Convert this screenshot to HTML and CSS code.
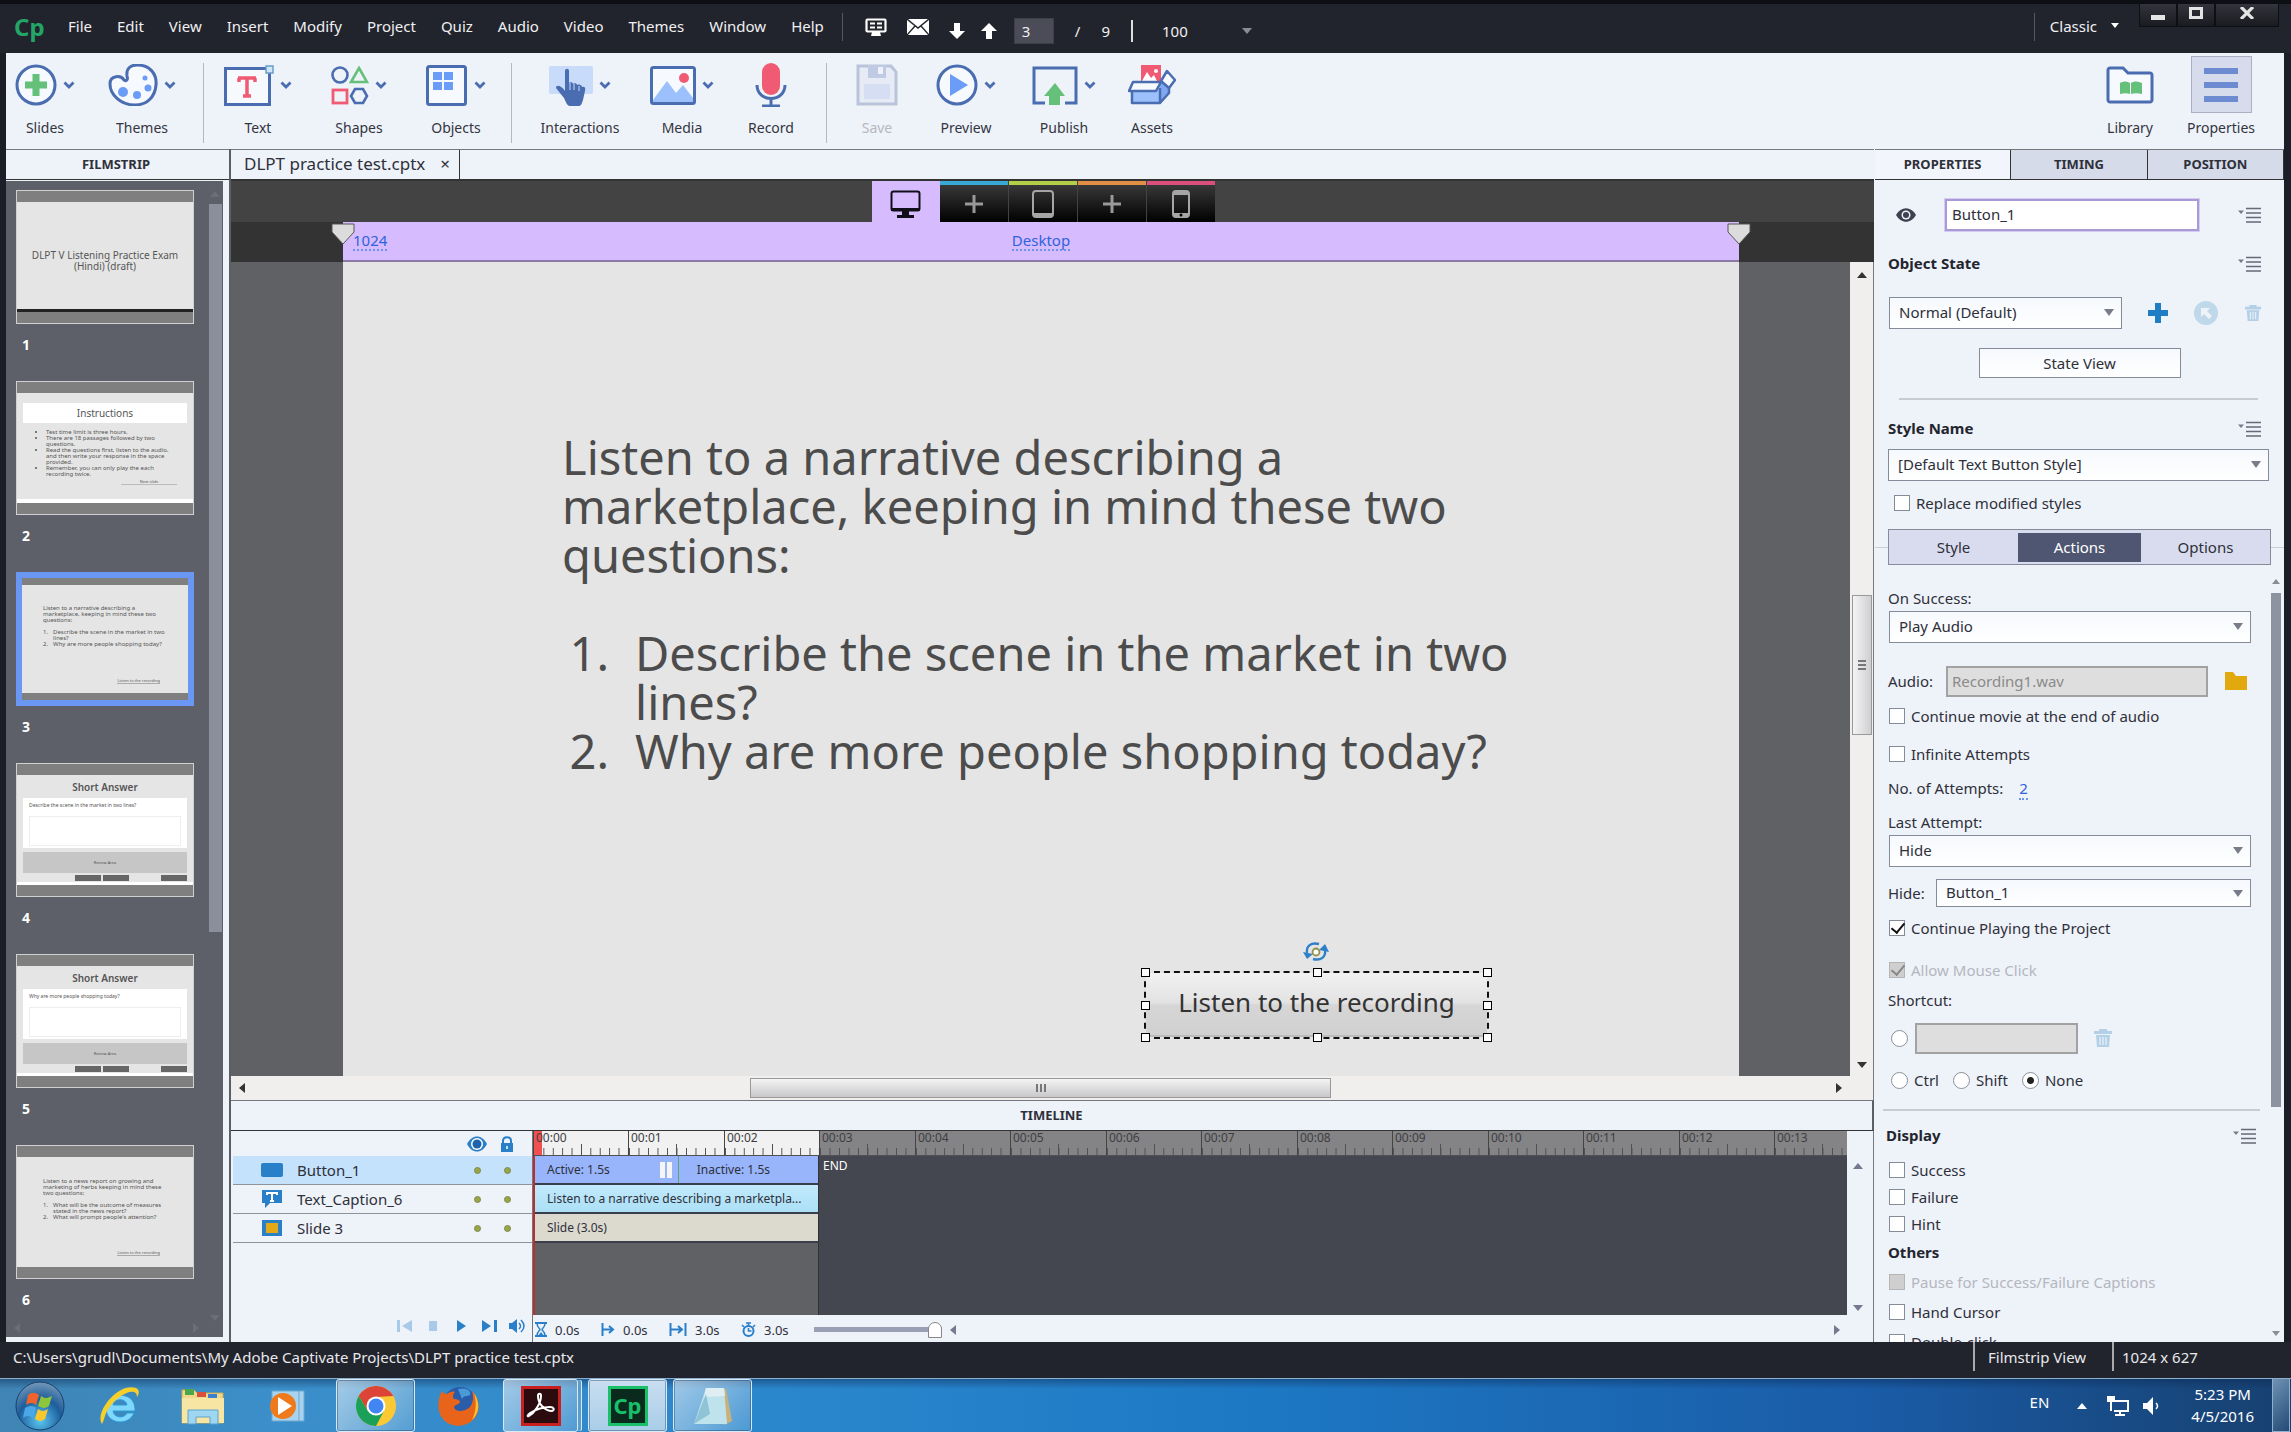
FILE: index.html
```html
<!DOCTYPE html>
<html lang="en">
<head>
<meta charset="utf-8">
<title>DLPT practice test.cptx</title>
<link rel="stylesheet" href="styles.css">
</head>
<body>
<svg class="defs" aria-hidden="true">
  <symbol id="chev" viewBox="0 0 12 8"><path d="M1.500 1.500 6 6l4.500-4.500" fill="none" stroke="#4a6cb0" stroke-width="2.800"/></symbol>
  <symbol id="menu" viewBox="0 0 24 16"><path d="M0 3.500h6L3 7z" fill="#777b88"/><path d="M8 1.500h15M8 6h15M8 10.500h15M8 15h15" stroke="#666a78" stroke-width="1.600"/></symbol>
  <symbol id="trash" viewBox="0 0 18 18"><path d="M5 0h8v2h5v3H0V2h5z" fill="#b4d0e6"/><path d="M2 6h14l-1 12H3z" fill="#b4d0e6"/><path d="M6 8v8M9 8v8M12 8v8" stroke="#eef2f9" stroke-width="1.200"/></symbol>
  <symbol id="plus" viewBox="0 0 18 18"><path d="M9 0v18M0 9h18" stroke="#999" stroke-width="3"/></symbol>
  <symbol id="grip" viewBox="0 0 24 22"><path d="M1 1h22v8L12 21 1 9z" fill="#dcdcdc" stroke="#555"/></symbol>
</svg>
<div class="window">
  <header class="titlebar">
    <span class="logo">Cp</span>
    <nav class="menus">
      <button>File</button><button>Edit</button><button>View</button><button>Insert</button><button>Modify</button><button>Project</button><button>Quiz</button><button>Audio</button><button>Video</button><button>Themes</button><button>Window</button><button>Help</button>
    </nav>
    <i class="bar-sep"></i>
    <div class="quick">
      <button aria-label="Review"><svg width="22" height="18" viewBox="0 0 22 18"><rect x="1.500" y="1.500" width="19" height="12" rx="1" fill="none" stroke="#fff" stroke-width="2.200"/><path d="M5 5.500h5M12 5.500h5M5 9.500h5M12 9.500h5" stroke="#fff" stroke-width="2"/><path d="M7 14h8l1 4H6z" fill="#fff"/></svg></button>
      <button aria-label="Mail"><svg width="22" height="16" viewBox="0 0 22 16"><path d="M0 0h22v16H0z" fill="#fff"/><path d="M0 0l11 9L22 0M0 16l8-9M22 16l-8-9" fill="none" stroke="#24262f" stroke-width="1.400"/></svg></button>
      <button class="low" aria-label="Next slide"><svg width="16" height="16" viewBox="0 0 16 16"><path d="M5 0h6v8h5l-8 8-8-8h5z" fill="#fff"/></svg></button>
      <button class="low" aria-label="Previous slide"><svg width="16" height="16" viewBox="0 0 16 16"><path d="M5 16h6V8h5L8 0 0 8h5z" fill="#fff"/></svg></button>
    </div>
    <div class="pager">
      <input class="page-input" aria-label="Slide number" value="3">
      <span>/</span><span>9</span><i class="zoom-sep"></i>
      <button class="zoom"><span>100</span><i class="tri"></i></button>
    </div>
    <i class="bar-sep end"></i>
    <button class="workspace"><span>Classic</span><i class="tri white small"></i></button>
    <div class="winbtns">
      <button aria-label="Minimize"><svg width="14" height="14" viewBox="0 0 14 14"><path d="M0 9h14v5H0z" fill="#e4e4e4"/></svg></button>
      <button aria-label="Maximize"><svg width="14" height="12" viewBox="0 0 14 12"><rect x="1.500" y="1.500" width="11" height="9" fill="none" stroke="#e4e4e4" stroke-width="3"/></svg></button>
      <button class="close" aria-label="Close"><svg width="14" height="12" viewBox="0 0 14 12"><path d="M1 0l12 12M13 0L1 12" stroke="#e4e4e4" stroke-width="3.200"/></svg></button>
    </div>
  </header>

  <div class="toolbar">
    <button class="tool w78"><span class="ico"><svg width="42" height="42" viewBox="0 0 42 42"><circle cx="21" cy="21" r="19" fill="#f6f9fe" stroke="#4a6cb0" stroke-width="3"/><path d="M21 10v22M10 21h22" stroke="#65c07a" stroke-width="7"/></svg><svg width="12" height="8"><use href="#chev"/></svg></span>Slides</button>
    <button class="tool w116"><span class="ico"><svg width="50" height="42" viewBox="0 0 50 42"><path d="M19 12C18 4 23 1 29 1c13 0 20 9 19 20-1 12-9 20-21 20C13 41 2 31 2 20c0-9 11-9 14-4 3 2 4-1 3-4z" fill="#f6f9fe" stroke="#4a6cb0" stroke-width="3"/><circle cx="15" cy="28" r="5" fill="#6b9cf7"/><circle cx="29" cy="31" r="4" fill="#6b9cf7"/><circle cx="40" cy="24" r="3.500" fill="#6b9cf7"/><circle cx="37" cy="14" r="2.500" fill="#6b9cf7"/></svg><svg width="12" height="8"><use href="#chev"/></svg></span>Themes</button>
    <i class="tool-sep"></i>
    <button class="tool w102"><span class="ico"><svg width="50" height="42" viewBox="0 0 50 42"><rect x="1.500" y="4.500" width="44" height="36" fill="#f6f9fe" stroke="#4a6cb0" stroke-width="3"/><rect x="42" y="2" width="7" height="7" fill="#cfe6fb" stroke="#6b9cc7" stroke-width="1.500"/><path d="M15 14v4M31 14v4M14 14h18M23 13v20M19 32h8" fill="none" stroke="#f05a72" stroke-width="3.500"/></svg><svg width="12" height="8"><use href="#chev"/></svg></span>Text</button>
    <button class="tool w100"><span class="ico"><svg width="38" height="42" viewBox="0 0 38 42"><circle cx="9" cy="11" r="7.500" fill="none" stroke="#4a6cb0" stroke-width="2.600"/><path d="M28 4l8 14H20z" fill="none" stroke="#65c07a" stroke-width="2.600"/><rect x="2" y="26" width="14" height="13" fill="none" stroke="#f05a72" stroke-width="2.800"/><path d="M24 25h8l4 7-4 7h-8l-4-7z" fill="none" stroke="#4a6cb0" stroke-width="2.600"/></svg><svg width="12" height="8"><use href="#chev"/></svg></span>Shapes</button>
    <button class="tool w94"><span class="ico"><svg width="42" height="42" viewBox="0 0 42 42"><rect x="1.500" y="2.500" width="38" height="38" rx="2" fill="#f6f9fe" stroke="#4a6cb0" stroke-width="3"/><path d="M7 8h9v8H7zM18 8h9v8h-9zM7 18h9v8H7zM18 18h9v8h-9z" fill="#6b9cf7"/></svg><svg width="12" height="8"><use href="#chev"/></svg></span>Objects</button>
    <i class="tool-sep"></i>
    <button class="tool w120"><span class="ico"><svg width="44" height="42" viewBox="0 0 44 42"><rect x="0" y="2" width="44" height="28" rx="2" fill="#c9dbfb"/><path d="M16 7c0-3 4-3 4 0v12c1-1 4-1 4 1 1-1 4-1 4 1 2-1 5 0 5 2 2-1 4 0 3 4l-2 9c-1 3-2 6-4 6H21c-3 0-4-4-6-8L7 24c0-4 6-2 9 3z" fill="#4a6cb0"/><path d="M21 19v7M25 20v6M30 22v5" stroke="#c9dbfb"/></svg><svg width="12" height="8"><use href="#chev"/></svg></span>Interactions</button>
    <button class="tool w84"><span class="ico"><svg width="46" height="42" viewBox="0 0 46 42"><rect x="1.500" y="3.500" width="43" height="36" rx="2" fill="#f6f9fe" stroke="#4a6cb0" stroke-width="3"/><path d="M3 36l14-19 9 12 7-8 10 13v4H3z" fill="#9cc0fb"/><circle cx="34" cy="14" r="5" fill="#f05a72"/></svg><svg width="12" height="8"><use href="#chev"/></svg></span>Media</button>
    <button class="tool w94"><span class="ico"><svg width="32" height="44" viewBox="0 0 32 44"><rect x="7" y="0" width="18" height="32" rx="9" fill="#f05a72"/><path d="M2 22c0 18 28 18 28 0M16 36v7M7 43h18" fill="none" stroke="#4a6cb0" stroke-width="3"/></svg></span>Record</button>
    <i class="tool-sep"></i>
    <button class="tool w84 save" disabled><span class="ico"><svg width="42" height="42" viewBox="0 0 42 42"><path d="M2 2h33l5 6v32H2z" fill="#e6ebf6" stroke="#b9c3da" stroke-width="3"/><path d="M12 1h18v13H12z" fill="#c0cbe3"/><path d="M22 3h5v7h-5z" fill="#eef2fa"/><path d="M8 20h26v15H8z" fill="#d5def3"/></svg></span>Save</button>
    <button class="tool w94"><span class="ico"><svg width="42" height="42" viewBox="0 0 42 42"><circle cx="21" cy="21" r="19" fill="#f6f9fe" stroke="#4a6cb0" stroke-width="3"/><path d="M14 10l18 11-18 11z" fill="#6b9cf7"/></svg><svg width="12" height="8"><use href="#chev"/></svg></span>Preview</button>
    <button class="tool w102"><span class="ico"><svg width="46" height="42" viewBox="0 0 46 42"><path d="M13 39H2V4h42v35H33" fill="none" stroke="#4a6cb0" stroke-width="3"/><path d="M17 41V32h-5l11-13 10 13h-5v9z" fill="#65c07a"/></svg><svg width="12" height="8"><use href="#chev"/></svg></span>Publish</button>
    <button class="tool w74"><span class="ico"><svg width="48" height="42" viewBox="0 0 48 42"><path d="M4 20h28v19H4z" fill="#9cc0fb"/><path d="M32 20l9-8v17l-9 10z" fill="#7fa8f0"/><path d="M13 1h20v19H13z" fill="#f05a72"/><circle cx="28" cy="7" r="2" fill="#fff"/><path d="M14 17l5-9 4 6 3-3 3 6z" fill="#fff"/><path d="M4 27v12h28V24M32 39l9-10v-7" fill="none" stroke="#4a6cb0" stroke-width="2.500" stroke-linejoin="round"/><path d="M5 18h28l-5 9H1zM33 17l6-10 8 9-6 8z" fill="#f6f9fe" stroke="#4a6cb0" stroke-width="2.500" stroke-linejoin="round"/></svg></span>Assets</button>
    <button class="tool w92 push"><span class="ico"><svg width="48" height="38" viewBox="0 0 48 38"><path d="M2 34V4c0-1 1-2 2-2h13l5 5h22c1 0 2 1 2 2v25c0 1-1 2-2 2H4c-1 0-2-1-2-2z" fill="#f6f9fe" stroke="#4a6cb0" stroke-width="3"/><path d="M14 17c4-2 7-2 10 0v11c-3-1-6-1-10 0zM25 17c3-2 7-2 11 0v11c-4-1-8-1-11 0z" fill="#65c07a"/><path d="M24.500 16v13" stroke="#f6f9fe"/></svg></span>Library</button>
    <button class="tool w90 on"><span class="ico"><svg width="34" height="34" viewBox="0 0 34 34"><path d="M0 3h34M0 17h34M0 31h34" stroke="#6c8bd0" stroke-width="6"/></svg></span>Properties</button>
  </div>

  <main class="body">
    <aside class="film">
      <h2 class="panel-title">FILMSTRIP</h2>
      <div class="film-body">
        <ol class="thumbs">
          <li><div class="thumb t-title"><p>DLPT V Listening Practice Exam (Hindi) (draft)</p></div><b>1</b></li>
          <li><div class="thumb t-instr"><h3>Instructions</h3><ul><li>Test time limit is three hours.</li><li>There are 18 passages followed by two questions.</li><li>Read the questions first, listen to the audio, and then write your response in the space provided.</li><li>Remember, you can only play the each recording twice.</li></ul><span>Next slide</span></div><b>2</b></li>
          <li><div class="thumb t-text selected"><p>Listen to a narrative describing a marketplace, keeping in mind these two questions:</p><div><i>1.</i><p>Describe the scene in the market in two lines?</p></div><div><i>2.</i><p>Why are more people shopping today?</p></div><span>Listen to the recording</span></div><b>3</b></li>
          <li><div class="thumb t-quiz"><h3>Short Answer</h3><div class="q"><p>Describe the scene in the market in two lines?</p><em></em></div><div class="rev">Review Area</div><div class="nav"><i></i><i></i><i class="sub"></i></div></div><b>4</b></li>
          <li><div class="thumb t-quiz"><h3>Short Answer</h3><div class="q"><p>Why are more people shopping today?</p><em></em></div><div class="rev">Review Area</div><div class="nav"><i></i><i></i><i class="sub"></i></div></div><b>5</b></li>
          <li><div class="thumb t-text"><p>Listen to a news report on growing and marketing of herbs keeping in mind these two questions:</p><div><i>1.</i><p>What will be the outcome of measures stated in the news report?</p></div><div><i>2.</i><p>What will prompt people's attention?</p></div><span>Listen to the recording</span></div><b>6</b></li>
        </ol>
        <div class="film-scroll"><i class="tri up dim"></i><i class="film-grip"></i><i class="tri dim"></i></div>
        <div class="film-foot"><i class="tri left dim"></i><i class="tri right dim"></i></div>
      </div>
    </aside>

    <section class="center">
      <div class="doctabs"><div class="doctab"><span>DLPT practice test.cptx</span><button aria-label="Close document">×</button></div></div>
      <div class="devices">
        <button class="dev desk" aria-label="Desktop view"><svg width="32" height="28" viewBox="0 0 32 28"><rect x="1.500" y="1.500" width="28" height="19" rx="2" fill="none" stroke="#100e18" stroke-width="2"/><path d="M1 18h29v3H1zM12 21h7v4h5v3H7v-3h5z" fill="#100e18"/></svg></button>
        <button class="dev c1" aria-label="Add view"><svg width="18" height="18"><use href="#plus"/></svg></button>
        <button class="dev c2" aria-label="Tablet view"><svg width="22" height="28" viewBox="0 0 22 28"><rect x="1" y="1" width="20" height="26" rx="3" fill="none" stroke="#a5a5a5" stroke-width="2"/><path d="M1 23h20v3H1z" fill="#a5a5a5"/></svg></button>
        <button class="dev c3" aria-label="Add view"><svg width="18" height="18"><use href="#plus"/></svg></button>
        <button class="dev c4" aria-label="Phone view"><svg width="18" height="28" viewBox="0 0 18 28"><rect x="1" y="1" width="16" height="26" rx="3" fill="none" stroke="#a5a5a5" stroke-width="2"/><path d="M1 2h16v3H1zM1 23h16v4H1z" fill="#a5a5a5"/><circle cx="9" cy="25" r="1.500" fill="#000"/></svg></button>
      </div>
      <div class="breakbar">
        <div class="breakpoint"><svg class="grip l" width="24" height="22"><use href="#grip"/></svg><a href="#w">1024</a><a class="mid" href="#d">Desktop</a><svg class="grip r" width="24" height="22"><use href="#grip"/></svg></div>
      </div>
      <div class="stage">
        <div class="stage-view">
          <article class="slide">
            <div class="caption">
              <p>Listen to a narrative describing a<br>marketplace, keeping in mind these two<br>questions:</p>
              <div class="item"><span>1.</span><p>Describe the scene in the market in two<br>lines?</p></div>
              <div class="item"><span>2.</span><p>Why are more people shopping today?</p></div>
            </div>
            <div class="selbox">
              <button class="slide-btn">Listen to the recording</button>
              <svg class="rot" width="28" height="22" viewBox="0 0 28 22"><path d="M5 12C4 5 9 1 17 3M23 9c1 7-4 11-12 9" fill="none" stroke="#2f80c8" stroke-width="2.400"/><path d="M1 11l4 7 6-5zM27 11l-4-8-6 6z" fill="#2f80c8"/><circle cx="14" cy="11" r="3.500" fill="#fff" stroke="#8f9148" stroke-width="1.800"/></svg>
              <i class="h nw"></i><i class="h n"></i><i class="h ne"></i><i class="h w"></i><i class="h e"></i><i class="h sw"></i><i class="h s"></i><i class="h se"></i>
            </div>
          </article>
        </div>
        <div class="vscroll"><i class="tri up dark"></i><div class="vthumb"><i></i><i></i><i></i></div><i class="tri dark"></i></div>
      </div>
      <div class="hscroll"><i class="tri left dark"></i><div class="hthumb"><i></i><i></i><i></i></div><i class="tri right dark"></i></div>

      <h2 class="panel-title tl-title">TIMELINE</h2>
      <div class="timeline">
        <div class="layers">
          <div class="layer head"><span></span>
            <svg width="20" height="16" viewBox="0 0 20 16"><path d="M0 8C5-2 15-2 20 8c-5 10-15 10-20 0z" fill="#2a7fc9"/><circle cx="10" cy="8" r="6" fill="#fff"/><circle cx="10" cy="8" r="4.500" fill="#1d64ad"/></svg>
            <svg width="14" height="16" viewBox="0 0 14 16"><path d="M3 7V5c0-5 8-5 8 0v2" fill="none" stroke="#2a7fc9" stroke-width="2"/><path d="M1 7h12v9H1z" fill="#2a7fc9"/><path d="M7 10v3" stroke="#fff" stroke-width="1.500"/></svg></div>
          <div class="layer active"><svg width="22" height="14" viewBox="0 0 22 14"><rect width="22" height="14" rx="2" fill="#2a7fc9"/></svg><span>Button_1</span><i></i><i></i></div>
          <div class="layer"><svg width="20" height="18" viewBox="0 0 20 18"><path d="M0 0h20v13H8l-5 5v-5H0z" fill="#2a7fc9"/><path d="M5 5V3h10v2M10 3v8M8 11h4" fill="none" stroke="#fff" stroke-width="2"/></svg><span>Text_Caption_6</span><i></i><i></i></div>
          <div class="layer"><svg width="20" height="16" viewBox="0 0 20 16"><path d="M0 0h20v16H0z" fill="#2a7fc9"/><path d="M4 3h12v10H4z" fill="#e2aa18"/></svg><span>Slide 3</span><i></i><i></i></div>
          <div class="playback">
            <button class="off" aria-label="Rewind"><svg width="16" height="12" viewBox="0 0 16 12"><path d="M0 0h3v12H0zM15 0v12L5 6z" fill="#2a7fc9"/></svg></button>
            <button class="off" aria-label="Stop"><svg width="16" height="12" viewBox="0 0 16 12"><path d="M4 1h8v10H4z" fill="#2a7fc9"/></svg></button>
            <button aria-label="Play"><svg width="16" height="12" viewBox="0 0 16 12"><path d="M4 0v12l9-6z" fill="#2a7fc9"/></svg></button>
            <button aria-label="To end"><svg width="16" height="12" viewBox="0 0 16 12"><path d="M1 0v12l9-6zM13 0h3v12h-3z" fill="#2a7fc9"/></svg></button>
            <button aria-label="Mute"><svg width="16" height="14" viewBox="0 0 16 14"><path d="M0 4h3l5-4v14l-5-4H0z" fill="#2a7fc9"/><path d="M10 4c2 2 2 4 0 6M12 1c4 4 4 8 0 12" fill="none" stroke="#2a7fc9" stroke-width="1.500"/></svg></button>
          </div>
        </div>
        <div class="tracks">
          <div class="ruler"><span class="lit first">00:00</span><span class="lit">00:01</span><span class="lit">00:02</span><span>00:03</span><span>00:04</span><span>00:05</span><span>00:06</span><span>00:07</span><span>00:08</span><span>00:09</span><span>00:10</span><span>00:11</span><span>00:12</span><span>00:13</span></div>
          <div class="lanes">
            <div class="lane-set">
              <div class="lane btn"><span>Active: 1.5s</span><i class="pause"></i><span class="inactive">Inactive: 1.5s</span></div>
              <div class="lane cap"><span>Listen to a narrative describing a marketpla...</span></div>
              <div class="lane sld"><span>Slide (3.0s)</span></div>
            </div>
            <b class="endmark">END</b>
          </div>
          <div class="tl-foot">
            <svg width="12" height="15" viewBox="0 0 12 15"><path d="M0 1h12M0 14h12" stroke="#2a7fc9" stroke-width="2"/><path d="M2 1c0 5 3 5 3 6.500S2 9 2 14h8c0-5-3-5-3-6.500S10 6 10 1" fill="none" stroke="#2a7fc9" stroke-width="1.500"/><path d="M3 14l3-4 3 4z" fill="#2a7fc9"/></svg><span>0.0s</span>
            <svg width="14" height="13" viewBox="0 0 14 13"><path d="M1.500 0v13M2 6.500h9M8 3l4 3.500L8 10" fill="none" stroke="#2a7fc9" stroke-width="2"/></svg><span>0.0s</span>
            <svg width="18" height="13" viewBox="0 0 18 13"><path d="M1.500 0v13M16.500 0v13M2 6.500h10M9 3l4 3.500L9 10" fill="none" stroke="#2a7fc9" stroke-width="2"/></svg><span>3.0s</span>
            <svg width="15" height="15" viewBox="0 0 15 15"><circle cx="7.500" cy="9" r="5" fill="none" stroke="#2a7fc9" stroke-width="2"/><path d="M5 1h5M7.500 1v3M1 3l2 2M14 3l-2 2M7.500 6v3h3" fill="none" stroke="#2a7fc9" stroke-width="1.600"/></svg><span>3.0s</span>
            <input class="tl-zoom" type="range" value="100" aria-label="Timeline zoom"><i class="tri left slate"></i><i class="tri right slate"></i>
          </div>
        </div>
        <div class="tl-scroll"><i class="tri up slate"></i><i class="tri slate"></i></div>
      </div>
    </section>

    <aside class="props">
      <div class="tabs"><button class="cur">PROPERTIES</button><button>TIMING</button><button>POSITION</button></div>
      <div class="prow name">
        <svg width="20" height="14" viewBox="0 0 20 14"><path d="M0 7C5-2 15-2 20 7c-5 9-15 9-20 0z" fill="#3e4150"/><circle cx="10" cy="7" r="4.500" fill="#eef2f9"/><circle cx="10" cy="7" r="3" fill="#3e4150"/></svg>
        <input class="name-input" aria-label="Object name" value="Button_1">
        <button class="more" aria-label="Menu"><svg width="24" height="16"><use href="#menu"/></svg></button>
      </div>
      <div class="prow h28"><h3>Object State</h3><button class="more" aria-label="Menu"><svg width="24" height="16"><use href="#menu"/></svg></button></div>
      <div class="prow state">
        <label class="sel"><select aria-label="Object state"><option>Normal (Default)</option></select></label>
        <button aria-label="Add state"><svg width="20" height="20" viewBox="0 0 20 20"><path d="M10 0v20M0 10h20" stroke="#1f7dc4" stroke-width="6"/></svg></button>
        <button aria-label="Reset state"><svg width="26" height="26" viewBox="0 0 26 26"><circle cx="13" cy="13" r="12" fill="#bfd9ea"/><path d="M8 17V8h9l-3 3 5 5-3 3-5-5z" fill="#eef2f9"/></svg></button>
        <button aria-label="Delete state"><svg width="16" height="18"><use href="#trash"/></svg></button>
      </div>
      <button class="stateview">State View</button>
      <hr class="rule">
      <div class="prow h40"><h3>Style Name</h3><button class="more" aria-label="Menu"><svg width="24" height="16"><use href="#menu"/></svg></button></div>
      <label class="sel style"><select aria-label="Style name"><option>[Default Text Button Style]</option></select></label>
      <label class="check replace"><input type="checkbox">Replace modified styles</label>
      <div class="seg-wrap"><div class="seg"><button>Style</button><button class="cur">Actions</button><button>Options</button></div></div>
      <div class="scroller">
        <div class="fields">
          <label class="line" for="succ">On Success:</label>
          <div class="sel"><select id="succ"><option>Play Audio</option></select></div>
          <div class="prow audio"><label for="aud">Audio:</label><input id="aud" disabled value="Recording1.wav"><button aria-label="Browse"><svg width="22" height="18" viewBox="0 0 22 18"><path d="M0 0h8l3 4h11v14H0z" fill="#e2a90f"/></svg></button></div>
          <label class="check"><input type="checkbox">Continue movie at the end of audio</label>
          <label class="check gap12"><input type="checkbox">Infinite Attempts</label>
          <div class="line gap8">No. of Attempts: <a href="#n">2</a></div>
          <label class="line gap8" for="last">Last Attempt:</label>
          <div class="sel"><select id="last"><option>Hide</option></select></div>
          <div class="prow hide gap12"><label for="hid">Hide:</label><div class="sel"><select id="hid"><option>Button_1</option></select></div></div>
          <label class="check gap8"><input type="checkbox" checked>Continue Playing the Project</label>
          <label class="check gap16 dis"><input type="checkbox" checked disabled>Allow Mouse Click</label>
          <label class="line gap4" for="key">Shortcut:</label>
          <div class="prow shortcut gap8"><input type="radio" name="mod" aria-label="Key"><input id="key" disabled><button aria-label="Clear shortcut"><svg width="18" height="18"><use href="#trash"/></svg></button></div>
          <div class="prow mods gap12"><label><input type="radio" name="mod">Ctrl</label><label><input type="radio" name="mod">Shift</label><label><input type="radio" name="mod" checked>None</label></div>
          <hr class="rule wide">
          <div class="prow h26 gap12"><h3>Display</h3><button class="more" aria-label="Menu"><svg width="24" height="16"><use href="#menu"/></svg></button></div>
          <label class="check gap8"><input type="checkbox">Success</label>
          <label class="check gap1"><input type="checkbox">Failure</label>
          <label class="check gap1"><input type="checkbox">Hint</label>
          <h3 class="line gap2">Others</h3>
          <label class="check gap4 dis"><input type="checkbox" disabled>Pause for Success/Failure Captions</label>
          <label class="check gap4"><input type="checkbox">Hand Cursor</label>
          <label class="check gap4"><input type="checkbox">Double-click</label>
        </div>
        <div class="pscroll"><i class="tri up small"></i><i class="pgrip"></i><i class="tri small"></i></div>
      </div>
    </aside>
  </main>

  <footer class="status"><span>C:\Users\grudl\Documents\My Adobe Captivate Projects\DLPT practice test.cptx</span><span class="cell view">Filmstrip View</span><span class="cell size">1024 x 627</span></footer>
</div>

<div class="taskbar">
  <button class="app start" aria-label="Start"><svg width="50" height="50" viewBox="0 0 50 50"><defs><radialGradient id="orb" cx=".5" cy=".8" r=".9"><stop offset="0" stop-color="#5cc8f2"/><stop offset=".5" stop-color="#1c5d9c"/><stop offset="1" stop-color="#8fa9bf"/></radialGradient></defs><circle cx="25" cy="25" r="24" fill="url(#orb)" stroke="#17406b"/><path d="M13 14c4-3 7-3 11 0l-3 10c-4-3-7-2-10 0z" fill="#f0632d"/><path d="M26 15c4 3 7 2 11 0l-3 10c-4 3-7 2-11 0z" fill="#8cc63c"/><path d="M10 27c4-2 7-3 11 0l-3 10c-4-3-7-2-10 0z" fill="#4aa8e8"/><path d="M23 28c4 3 7 2 10 0l-3 10c-4 3-7 2-10 0z" fill="#fcc72d"/></svg></button>
  <button class="app w84" aria-label="Internet Explorer"><svg width="42" height="42" viewBox="0 0 42 42"><path d="M37 26H15c1 7 11 8 14 2h7c-5 13-27 12-28-4C8 7 38 4 37 26zM15 20h14c-1-7-13-7-14 0z" fill="#7fd8fb" stroke="#2c9bd8"/><path d="M4 39C-4 28 20-3 38 3c4 2 3 6 1 9 0-12-21-2-30 14-3 6-3 10-5 13z" fill="#f5cf2b"/></svg></button>
  <button class="app w84" aria-label="Explorer"><svg width="44" height="40" viewBox="0 0 44 40"><path d="M1 4h12l3 3h26v30H1z" fill="#f0d98a" stroke="#c9a94e"/><path d="M4 3h9v6H4z" fill="#4aa84a"/><path d="M16 6h9v5h-9z" fill="#d8503e"/><path d="M27 8h9v5h-9z" fill="#3f7fd0"/><path d="M1 12h42v25H1z" fill="#f7e6a3"/><path d="M7 24h30v14h-8v-7H15v7H7z" fill="#9fd6f2" stroke="#5aa3cc"/></svg></button>
  <button class="app w84" aria-label="Media Player"><svg width="38" height="34" viewBox="0 0 38 34"><path d="M4 2h32v30H4z" fill="#a9d2ec" stroke="#6aa9d2"/><path d="M31 2v30" stroke="#6aa9d2"/><circle cx="15" cy="17" r="13" fill="#ef7a1c"/><path d="M10 8l14 9-14 9z" fill="#fff"/></svg></button>
  <button class="app task chrome" aria-label="Chrome"><svg width="40" height="40" viewBox="0 0 40 40"><circle cx="20" cy="20" r="20" fill="#fbc934"/><path d="M2.700 10A20 20 0 0 1 37.300 10L20 11l-8 14z" fill="#db4437"/><path d="M2.700 10A20 20 0 0 0 20 40l8-15-16 0z" fill="#1ba05a"/><circle cx="20" cy="20" r="9.500" fill="#fff"/><circle cx="20" cy="20" r="7.500" fill="#4285f4"/></svg></button>
  <button class="app w88" aria-label="Firefox"><svg width="42" height="42" viewBox="0 0 42 42"><circle cx="22" cy="19" r="17" fill="#2a5caa"/><path d="M20 4c8-2 14 2 12 6-4 2-6 0-8 4z" fill="#4a9ad8"/><path d="M4 6c1 2 3 3 5 3 2-2 6-3 8-2-2 2-3 5-1 7 3 0 6 1 6 3-1 3-5 2-6 5 1 5 9 5 15 1 4-4 5-10 3-17 8 8 9 20 2 28-8 9-24 9-31 0C-1 27-1 15 4 6z" fill="#e8641b"/><path d="M36 8c6 9 6 20-2 27 4-9 5-17 2-27z" fill="#f9c22e"/></svg></button>
  <button class="app task stack" aria-label="Acrobat"><svg width="40" height="40" viewBox="0 0 40 40"><path d="M1.500 1.500h37v37h-37z" fill="#2b0b0e" stroke="#c8201e" stroke-width="3"/><path d="M8 30c5-3 12-12 12-20 0-3-3-3-3 0 0 8 7 15 14 15 3-1 2-4-2-4-7 0-15 3-20 6-3 2-3 4-1 3z" fill="none" stroke="#fff" stroke-width="2"/></svg></button>
  <button class="app task lit" aria-label="Captivate"><span class="cp">Cp</span></button>
  <button class="app task" aria-label="Notepad"><svg width="42" height="42" viewBox="0 0 42 42"><path d="M14 4h20l6 32-8 4z" fill="#c9b27a"/><path d="M14 3h18l3 36H2z" fill="#bfe3ec"/><path d="M14 3h18l1 8-21 1z" fill="#dfeef2"/><path d="M2 39l12-30 4 20z" fill="#8fc4d6"/></svg></button>
  <div class="tray">
    <span class="lang">EN</span>
    <i class="tri up white"></i>
    <svg width="22" height="20" viewBox="0 0 22 20"><path d="M6 5h15v10H7M13 15v3M8 19h10" fill="none" stroke="#fff" stroke-width="2"/><path d="M0 0h8v6H0zM3 6h2v9H3z" fill="#fff"/></svg>
    <svg width="18" height="18" viewBox="0 0 18 18"><path d="M0 6h4l6-6v18l-6-6H0z" fill="#fff"/><path d="M13 6c2 2 2 4 0 6" fill="none" stroke="#fff" stroke-width="1.500"/></svg>
    <time>5:23 PM<br>4/5/2016</time>
    <button class="peek" aria-label="Show desktop"></button>
  </div>
</div>
</body>
</html>
```

FILE: styles.css
```css
* { box-sizing: border-box; }
body {
  margin: 0;
  height: 100vh;
  min-width: 1700px;
  display: flex;
  flex-direction: column;
  overflow: hidden;
  background: #1c1e27;
  color: #2e303a;
  font: 15px/20px "Noto Sans", "Open Sans", sans-serif;
}
button, input, select { font: inherit; color: inherit; margin: 0; }
button { border: 0; background: none; padding: 0; }
h2, h3, p, ol, ul { margin: 0; padding: 0; }
ol, ul { list-style: none; }
i { font-style: normal; }
svg { display: block; flex: none; }
a { color: #2f62dc; text-decoration: none; border-bottom: 2px dotted #6d92ea; line-height: 18px; }
.defs { position: absolute; width: 0; height: 0; }

.tri { display: block; flex: none; width: 0; height: 0; border: 5px solid transparent; border-top: 6px solid #8b8d94; border-bottom: 0; }
.tri.up { border-bottom: 6px solid #8b8d94; border-top: 0; }
.tri.left { border: 5px solid transparent; border-right: 6px solid #8b8d94; border-left: 0; }
.tri.right { border: 5px solid transparent; border-left: 6px solid #8b8d94; border-right: 0; }
.tri.white { border-top-color: #fff; }
.tri.up.white { border-bottom-color: #fff; border-top-color: transparent; }
.tri.dark { border-top-color: #333; }
.tri.up.dark { border-bottom-color: #333; }
.tri.left.dark { border-color: transparent #333 transparent transparent; }
.tri.right.dark { border-color: transparent transparent transparent #333; }
.tri.slate { border-top-color: #74798f; }
.tri.up.slate { border-bottom-color: #74798f; }
.tri.left.slate { border-color: transparent #74798f transparent transparent; }
.tri.right.slate { border-color: transparent transparent transparent #74798f; }
.tri.dim { opacity: .3; }
.tri.small { border-width: 5px 4px 0; }
.tri.small.up { border-width: 0 4px 5px; }

.window { flex: 1; min-height: 0; display: flex; flex-direction: column; padding: 0 7px 0 6px; }

.titlebar { height: 53px; flex: none; display: flex; align-items: center; background: #22242d; color: #f0f0f2; border-top: 4px solid #0d0f14; margin: 0 -7px 0 -6px; padding-left: 14px; }
.logo { width: 54px; font-size: 24px; line-height: 30px; font-weight: 700; color: #22a566; padding-bottom: 4px; }
.menus { display: flex; gap: 25px; padding-bottom: 6px; }
.bar-sep { width: 1px; height: 28px; margin: 0 22px 4px 18px; background: #555862; }
.bar-sep.end { margin: 0 15px 4px auto; }
.quick { display: flex; align-items: center; gap: 20px; padding-bottom: 4px; }
.quick .low { padding-top: 8px; margin-right: -4px; }
.pager { display: flex; align-items: center; gap: 21px; padding: 4px 0 0 21px; }
.page-input { width: 40px; height: 26px; border: 1px solid #3c3e48; background: #4b4c58; padding: 0 7px; }
.zoom-sep { width: 2px; height: 22px; background: #ddd; }
.zoom { display: flex; align-items: center; gap: 54px; padding-left: 8px; }
.workspace { display: flex; align-items: center; gap: 14px; padding-bottom: 6px; }
.winbtns { display: flex; align-self: flex-start; margin: 0 12px 0 20px; }
.winbtns button { width: 38px; height: 23px; display: flex; align-items: center; justify-content: center; background: linear-gradient(#33353c, #1a1b20); border: 1px solid #0e0f13; border-top: 0; padding-bottom: 4px; }
.winbtns .close { width: 64px; }

.toolbar { height: 96px; flex: none; display: flex; align-items: stretch; background: #eef2f9; }
.tool { display: flex; flex-direction: column; align-items: center; font-size: 14px; line-height: 20px; color: #33353f; padding-top: 3px; }
.ico { height: 57px; margin-bottom: 5px; display: flex; align-items: center; gap: 6px; }
.tool-sep { width: 1px; margin: 10px 3px 6px; background: #b4b8c2; }
.w74 { width: 74px; } .w78 { width: 78px; } .w84 { width: 84px; } .w90 { width: 90px; } .w92 { width: 92px; }
.w94 { width: 94px; } .w100 { width: 100px; } .w102 { width: 102px; } .w116 { width: 116px; } .w120 { width: 120px; }
.w94 + .tool-sep { margin: 10px 8px 6px; }
.push { margin-left: auto; }
.save { color: #b5b8c0; }
.on { margin-right: 18px; }
.on .ico { width: 61px; justify-content: center; background: #d7dcec; border: 1px solid #a9b0c4; }

.body { flex: 1; min-height: 0; display: grid; grid-template-columns: 225px 1fr 410px; background: #eef2f9; }
.panel-title { height: 31px; margin: 0; font-size: 13px; line-height: 28px; font-weight: 700; text-align: center; border-top: 1px solid #75777e; border-bottom: 1px solid #333; }

.film { min-height: 0; display: flex; flex-direction: column; border-right: 2px solid #5c5e66; }
.film .panel-title { margin-bottom: 1px; padding-right: 3px; }
.film-body { flex: 1; min-height: 0; margin: 0 6px 5px 0; display: grid; grid-template-columns: 1fr 16px; grid-template-rows: 1fr 16px; background: #5d6069; }
.thumbs { min-height: 0; overflow: hidden; padding: 9px 0 0 10px; }
.thumbs > li { height: 191px; color: #fff; }
.thumbs b { display: block; padding: 11px 0 0 6px; font-size: 14px; }
.thumb { width: 178px; height: 134px; background: #e5e5e5; color: #555; border: 1px solid #d0d0d0; box-shadow: inset 0 11px #7f7f7f, inset 0 -11px #7f7f7f; font-size: 6px; line-height: 6px; padding: 11px 6px; overflow: hidden; }
.thumb.selected { border: 6px solid #6b97f4; box-shadow: inset 0 7px #7f7f7f, inset 0 -7px #7f7f7f; }
.t-title { background: linear-gradient(#e5e5e5 118px, #222 118px, #222 122px, #7f7f7f 122px); text-align: center; font-size: 10px; line-height: 11px; padding: 59px 12px 0; }
.t-instr h3 { background: #fff; margin: 10px 0 6px; font-size: 10px; line-height: 20px; font-weight: 400; text-align: center; }
.t-instr { box-shadow: inset 0 11px #7f7f7f, inset 0 -11px #7f7f7f, inset 0 -15px #fff; }
.t-instr li { margin: 0 12px 0 23px; display: list-item; list-style: disc; font-size: 6px; line-height: 6px; }
.t-instr > span { display: block; width: 56px; margin: 3px 0 0 98px; text-align: center; font-size: 4px; line-height: 4px; border-bottom: 1px solid #bbb; }
.t-text { padding: 32px 28px 0 26px; display: flex; flex-direction: column; }
.t-text.selected { padding: 27px 23px 0 21px; }
.t-text > p { width: 122px; margin-bottom: 6px; }
.t-text div { display: flex; gap: 5px; }
.t-text > span { margin: auto 5px 16px auto; font-size: 4px; line-height: 5px; border-bottom: 1px solid #aaa; }
.t-text:not(.selected) > span { margin-bottom: 22px; }
.t-quiz { box-shadow: inset 0 11px #7f7f7f, inset 0 -11px #7f7f7f, inset 0 -14px #fff; }
.t-quiz h3 { font-size: 10px; line-height: 12px; font-weight: 600; text-align: center; margin: 6px 0 5px; }
.q { background: #fff; height: 50px; padding: 4px 6px; }
.q p { font-size: 5px; }
.q em { display: block; height: 30px; margin-top: 8px; border: 1px solid #eee; }
.rev { height: 21px; margin-top: 4px; background: #c6c6c6; font-size: 4px; line-height: 21px; text-align: center; }
.nav { display: flex; gap: 2px; padding: 2px 0 0 52px; }
.nav i { width: 26px; height: 6px; background: #666; }
.nav .sub { margin-left: auto; }
.film-scroll { display: flex; flex-direction: column; align-items: center; padding-top: 10px; }
.film-scroll .tri:last-child { margin-top: auto; }
.film-grip { width: 13px; height: 728px; margin-top: 7px; background: #8b8f9c; }
.film-foot { display: flex; justify-content: space-between; padding: 2px 8px 0; }

.center { min-width: 0; min-height: 0; display: flex; flex-direction: column; }
.doctabs { height: 32px; flex: none; display: flex; border-top: 1px solid #75777e; border-bottom: 2px solid #333; }
.doctab { display: flex; align-items: center; gap: 15px; padding: 0 9px 2px 13px; font-size: 17px; border-right: 1px solid #333; }
.devices { height: 41px; flex: none; display: flex; justify-content: center; gap: 1px; padding-right: 18px; background: #434343; }
.dev { width: 68px; display: flex; align-items: center; justify-content: center; background: linear-gradient(#383838, #000); border-top: 4px solid; }
.desk { background: #d6bcff; border-color: #d6bcff; margin-right: -1px; }
.c1 { border-color: #38a8d4; } .c2 { border-color: #b2cf47; } .c3 { border-color: #e08f45; } .c4 { border-color: #db4f7d; }
.breakbar { height: 40px; flex: none; background: #333; padding: 0 135px 0 112px; }
.breakpoint { position: relative; height: 40px; display: grid; grid-template-columns: 100px 1fr 100px; align-items: center; justify-items: center; background: #d6bcff; border-bottom: 2px solid #8b7ba6; }
.breakpoint a:first-of-type { justify-self: start; margin-left: 10px; }
.grip { position: absolute; top: 1px; }
.grip.l { left: -12px; } .grip.r { right: -12px; }
.stage { flex: 1; min-height: 0; display: flex; }
.stage-view { flex: 1; padding: 0 111px 0 112px; background: #5f6164; overflow: hidden; }
.slide { position: relative; height: 100%; background: #e5e5e5; overflow: hidden; }
.caption { position: absolute; left: 219px; top: 171px; font-size: 47px; line-height: 49px; color: #4c4c4c; white-space: nowrap; }
.caption > p { margin-bottom: 49px; }
.item { display: grid; grid-template-columns: 47px auto; column-gap: 26px; justify-content: start; }
.item span { text-align: right; }
.selbox { position: absolute; right: 250px; top: 709px; width: 345px; height: 68px; border: 2px dashed #111; }
.slide-btn { width: 100%; height: 100%; font-size: 26px; line-height: 36px; padding-bottom: 4px; color: #333; background: linear-gradient(#f1f1f1, #e2e2e2 48%, #d6d6d6 52%, #d0d0d0); border-bottom: 2px solid #bbb; }
.rot { position: absolute; left: 156px; top: -32px; }
.h { position: absolute; width: 9px; height: 9px; background: #fff; border: 1px solid #000; }
.nw, .n, .ne { top: -5px; } .w, .e { top: 28px; } .sw, .s, .se { bottom: -5px; }
.nw, .w, .sw { left: -5px; } .n, .s { left: 167px; } .ne, .e, .se { right: -5px; }
.vscroll { width: 24px; display: flex; flex-direction: column; align-items: center; justify-content: space-between; padding: 10px 0 8px; background: #f0efee; border-right: 1px solid #77797f; }
.vthumb { width: 20px; height: 140px; margin-bottom: 10px; border: 1px solid #999; display: flex; flex-direction: column; align-items: center; justify-content: center; gap: 2px; background: linear-gradient(90deg, #f4f4f4, #cfcfd2); }
.vthumb i { width: 8px; height: 2px; background: #777; }
.hscroll { height: 24px; flex: none; display: flex; align-items: center; justify-content: space-between; padding: 0 31px 0 8px; background: #f0efee; border-right: 1px solid #77797f; }
.hthumb { width: 581px; height: 20px; border: 1px solid #999; display: flex; align-items: center; justify-content: center; gap: 2px; background: linear-gradient(#f4f4f4, #c8c8cc); }
.hthumb i { width: 2px; height: 8px; background: #777; }

.tl-title { flex: none; border-right: 2px solid #5c5e66; }
.timeline { height: 211px; flex: none; display: grid; grid-template-columns: 302px 1fr 26px; border-right: 1px solid #77797f; }
.layers { display: flex; flex-direction: column; border-right: 1px solid #777; }
.layer { height: 29px; flex: none; display: grid; grid-template-columns: 22px 1fr 20px 20px; column-gap: 10px; align-items: center; justify-items: center; margin-left: 2px; padding: 0 15px 0 28px; border-bottom: 1px solid #8f939c; }
.layer span { justify-self: start; margin-left: 4px; }
.layer.head { height: 25px; border: 0; }
.layer.head span { grid-column: span 2; }
.layer.active { background: #c4e2fc; }
.layer i { width: 7px; height: 7px; border-radius: 50%; background: #9aa544; border: 1px solid #7d8a52; }
.playback { margin-top: auto; display: flex; justify-content: flex-end; align-items: center; gap: 12px; padding: 0 7px 9px; }
.off { opacity: .35; }
.tracks { min-width: 0; display: flex; flex-direction: column; overflow: hidden; }
.ruler { height: 25px; flex: none; display: grid; grid-template-columns: repeat(7, 95px 96px); overflow: hidden; font-size: 12px; line-height: 14px; }
.ruler span { padding-left: 2px; border-left: 1px solid #444; color: #3e3e42; background: linear-gradient(90deg, #505055 1px, transparent 1px) 0 100% / 10% 7px repeat-x, linear-gradient(#505055, #505055) 50% 100% / 1px 11px no-repeat, #848486; border-bottom: 1px solid #505055; }
.ruler .lit { background-color: #f1f1f1; }
.ruler .first { background-image: linear-gradient(90deg, #f05050 8px, transparent 8px), linear-gradient(90deg, #505055 1px, transparent 1px), linear-gradient(#505055, #505055); background-size: 100% 100%, 10% 7px, 1px 11px; background-position: 0 0, 0 100%, 50% 100%; background-repeat: no-repeat, repeat-x, no-repeat; }
.lanes { flex: 1; display: flex; background: #44474f; }
.lane-set { width: 286px; background: #5f6164; border-left: 2px solid #b53030; border-right: 1px solid #333; }
.lane { height: 29px; display: flex; align-items: center; padding-left: 12px; font-size: 12px; border-bottom: 2px solid #3a3e4a; }
.btn { background: #98b4fb; padding-right: 48px; }
.cap { background: linear-gradient(#c2eafc, #abdff6); }
.sld { background: #dcd9cf; }
.pause { width: 12px; height: 16px; margin: 0 6px 0 auto; border: solid #f5f5f5; border-width: 0 5px; }
.inactive { padding-left: 18px; line-height: 27px; border-left: 1px solid #5aa37a; }
.endmark { padding: 2px 4px; font-size: 12px; line-height: 16px; font-weight: 400; color: #fff; }
.tl-foot { height: 27px; flex: none; display: flex; align-items: center; gap: 8px; padding: 2px 7px 0 2px; font-size: 13px; }
.tl-foot span { width: 38px; }
.tl-zoom { appearance: none; width: 128px; height: 16px; margin: 0 0 0 4px; background: linear-gradient(#9a9fb4, #9a9fb4) 0 50% / 100% 5px no-repeat; }
.tl-zoom::-webkit-slider-thumb { appearance: none; width: 14px; height: 16px; background: #fff; border: 1px solid #888; border-radius: 7px 7px 0 0; }
.tl-foot .right { margin-left: auto; }
.tl-scroll { display: flex; flex-direction: column; align-items: center; justify-content: space-between; padding: 32px 4px 31px 0; }

.props { min-width: 0; min-height: 0; display: flex; flex-direction: column; padding-left: 1px; background: #eef2f9; }
.tabs { height: 31px; flex: none; display: grid; grid-template-columns: 1fr 1fr 1fr; border-top: 1px solid #75777e; border-bottom: 1px solid #333; }
.tabs button { font-size: 13px; font-weight: 700; background: #d6dbe9; border-right: 1px solid #333; padding-bottom: 2px; }
.tabs .cur { background: #f2f5fb; }
.props h3 { font-size: 15px; line-height: 24px; font-weight: 700; color: #23252e; padding-bottom: 2px; }
.prow { flex: none; display: flex; align-items: center; padding: 0 22px 0 13px; }
.more { margin-left: auto; }
.name { height: 70px; padding-left: 21px; }
.name-input { width: 254px; height: 32px; margin-left: 29px; border: 2px solid #a99ad6; box-shadow: 0 0 0 1px #d7cbf5; background: #fff; padding: 0 5px 2px; }
.h26 { height: 26px; } .h28 { height: 28px; } .h40 { height: 40px; margin-top: 9px; }
.state { height: 70px; gap: 24px; padding: 0 23px 0 14px; justify-content: space-between; }
.state .sel { width: 233px; }
.sel { position: relative; display: block; flex: none; height: 32px; }
.sel select { appearance: none; width: 100%; height: 100%; border: 1px solid #868b9a; border-radius: 0; padding: 0 9px 2px; background: linear-gradient(#f6f9fd, #fff); }
.sel::after { content: ""; position: absolute; right: 8px; top: 12px; border: 5px solid transparent; border-top: 7px solid #787c89; border-bottom: 0; }
.stateview { width: 202px; height: 30px; flex: none; align-self: center; border: 1px solid #868b9a; background: linear-gradient(#f6f9fd, #fff); }
.rule { flex: none; height: 2px; border: 0; margin: 20px 26px 0 24px; background: #c7cbd4; width: auto; }
.style { margin: 0 15px 0 13px; }
.check { height: 26px; flex: none; display: flex; align-items: center; gap: 6px; }
.check input { appearance: none; width: 16px; height: 16px; border: 1px solid #868b9a; background: #fff; position: relative; }
.check input:checked::after { content: ""; position: absolute; left: 4px; top: -1px; width: 6px; height: 11px; border: solid #111; border-width: 0 2px 2px 0; rotate: 40deg; }
.check input:disabled { background: #cfcfcf; border-color: #b5b5b5; }
.check input:disabled:checked::after { border-color: #888; }
.dis { color: #b4b7bf; }
.replace { margin: 9px 0 0 19px; }
.seg-wrap { flex: none; margin-top: 13px; padding: 0 13px; background: linear-gradient(#c9cdd8, #c9cdd8) 0 18px / 100% 1px no-repeat; }
.seg { height: 36px; display: grid; grid-template-columns: 129px 123px 1fr; border: 1px solid #868b9a; background: #d8dcee; }
.seg .cur { background: #4e5671; color: #fff; margin: 3px 0 2px; padding-bottom: 2px; }
.scroller { flex: 1; min-height: 0; display: flex; overflow: hidden; }
.fields { flex: 1; display: flex; flex-direction: column; padding: 20px 0 0 14px; }
.fields > .line { height: 26px; flex: none; line-height: 26px; margin-left: -1px; white-space: pre; }
.fields a { margin-left: 12px; }
.fields > .sel { margin-right: 16px; }
.fields .prow { padding: 0; }
.audio { height: 44px; margin-top: 16px; }
.fields .prow > label:first-child:not(:has(input)) { margin-left: -1px; }
.audio label { width: 58px; }
.fields input:disabled:not([type]) { background: #dedede; border: 2px solid #a2a2a2; color: #8a8a8a; height: 31px; padding: 0 4px; }
.audio input { width: 262px; }
.audio button { margin-left: 17px; }
.hide { margin-right: 16px; }
.hide label { width: 48px; }
.hide .sel { flex: 1; height: 28px; }
.hide .sel::after { top: 11px; }
.fields > .gap1 { margin-top: 1px; } .fields > .gap2 { margin-top: 2px; } .fields > .gap4 { margin-top: 4px; } .fields > .gap8 { margin-top: 8px; }
.fields > .gap12 { margin-top: 12px; } .fields > .gap16 { margin-top: 16px; }
input[type=radio] { appearance: none; width: 17px; height: 17px; border: 1px solid #8b8f9c; border-radius: 50%; background: #fff; }
input[type=radio]:checked { background: radial-gradient(#222 3px, #fff 4px); }
.shortcut { gap: 7px; height: 34px; }
.shortcut input:not([type]) { width: 163px; }
.fields .shortcut, .fields .mods { padding-left: 2px; }
.shortcut button { margin-left: 9px; }
.mods { height: 26px; gap: 14px; }
.mods label { display: flex; align-items: center; gap: 6px; }
.fields .wide { margin: 16px 7px 0 -6px; }
.fields .h26 { padding-right: 10px; margin-left: -3px; }
.pscroll { width: 17px; flex: none; display: flex; flex-direction: column; align-items: center; padding: 14px 0 6px; }
.pgrip { width: 10px; height: 514px; margin-top: 9px; background: #8e93a2; }
.pscroll .tri:last-child { margin-top: auto; }

.status { height: 36px; flex: none; display: flex; background: #22242d; color: #e9e9ec; margin: 0 -7px 0 -6px; padding: 0 7px 0 13px; line-height: 30px; }
.status .cell { border-left: 2px solid #aaa; margin-bottom: 8px; padding-left: 13px; line-height: 30px; height: 29px; }
.status .view { margin-left: auto; width: 139px; }
.status .size { width: 172px; padding-left: 8px; }

.taskbar { height: 54px; flex: none; display: flex; align-items: stretch; border-top: 1px solid #8fb0cc; background: linear-gradient(rgba(10,40,80,.45), transparent 10px), linear-gradient(90deg, #3f84b4, #3b8fca 12%, #2a86cc 35%, #1d78c4 55%, #1a5ba6 82%, #17406f); padding-left: 10px; }
.app { display: flex; align-items: center; justify-content: center; }
.start { width: 67px; margin-left: -4px; margin-right: 4px; }
.w88 { width: 88px; }
.task { width: 79px; border: 1px solid #d5e9f7; border-radius: 3px; background: linear-gradient(135deg, rgba(255,255,255,.55), rgba(255,255,255,.15)); box-shadow: inset 0 0 0 1px rgba(20,60,100,.4); }
.chrome { margin-left: 7px; }
.stack { width: 75px; margin-right: 10px; box-shadow: 4px 0 0 -1px #5f9cc9, 5px 0 0 -1px #d5e9f7; }
.lit.task { background: linear-gradient(#c9def0, #a9cde8); margin-right: 6px; }
.cp { width: 40px; height: 40px; border: 3px solid #19c06a; background: #0a2a1e; color: #19c06a; font-size: 22px; line-height: 32px; font-weight: 700; }
.tray { margin-left: auto; display: flex; align-items: center; color: #fff; gap: 20px; }
.lang { padding-bottom: 8px; margin-right: 8px; }
.tray svg:first-of-type { margin-right: -6px; }
.tray time { text-align: center; line-height: 22px; padding: 0 3px 2px 10px; }
.peek { width: 18px; align-self: stretch; border: 1px solid #8fb0cc; background: linear-gradient(135deg, #6f93b5, #234a76); margin: -1px 1px 0 -5px; }
```
